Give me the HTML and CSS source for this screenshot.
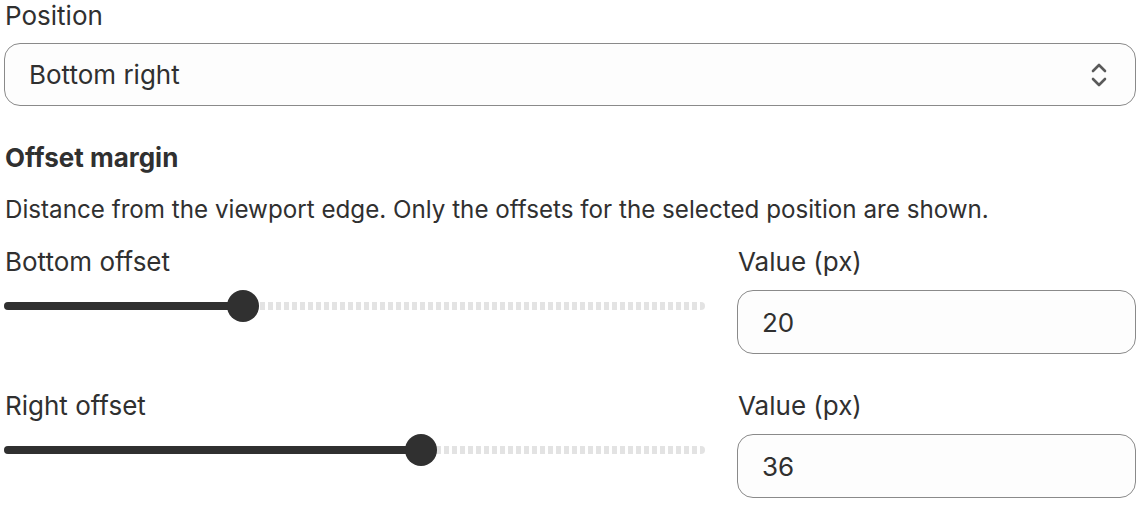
FILE: index.html
```html
<!DOCTYPE html>
<html lang="en">
<head>
    <meta charset="UTF-8">
    <title>Offset margin</title>
    <link rel="stylesheet" href="styles.css">
</head>
<body>
    <div class="panel">
        <div class="field">
            <label class="label">Position</label>
            <div class="select">
                <span class="select-value">Bottom right</span>
                <svg class="select-icon" viewBox="0 0 20 20" width="40" height="40">
                    <polyline points="7,8 10,5 13,8" />
                    <polyline points="7,12 10,15 13,12" />
                </svg>
            </div>
        </div>

        <div class="section">
            <h3 class="heading">Offset margin</h3>
            <p class="help">Distance from the viewport edge. Only the offsets for the selected position are shown.</p>

            <div class="offset-row">
                <div class="offset-slider">
                    <label class="label">Bottom offset</label>
                    <div class="range" data-value="20" data-max="60">
                        <div class="range-track"><div class="range-fill"></div></div>
                        <div class="range-thumb"></div>
                    </div>
                </div>
                <div class="offset-value">
                    <label class="label">Value (px)</label>
                    <input class="text-input" type="text" value="20">
                </div>
            </div>

            <div class="offset-row">
                <div class="offset-slider">
                    <label class="label">Right offset</label>
                    <div class="range" data-value="36" data-max="60">
                        <div class="range-track"><div class="range-fill"></div></div>
                        <div class="range-thumb"></div>
                    </div>
                </div>
                <div class="offset-value">
                    <label class="label">Value (px)</label>
                    <input class="text-input" type="text" value="36">
                </div>
            </div>
        </div>
    </div>

    <script>
        // place thumb + fill from the value
        document.querySelectorAll('.range').forEach(function (range) {
            const value = parseFloat(range.dataset.value);
            const max = parseFloat(range.dataset.max);
            const travel = range.clientWidth - 32;
            const center = 16 + travel * value / max;
            range.querySelector('.range-fill').style.width = center + 'px';
            range.querySelector('.range-thumb').style.left = (center - 16) + 'px';
        });
    </script>
</body>
</html>
```

FILE: styles.css
```css
body {
    margin: 0;
    background: #fff;
    color: #303030;
    font-family: Inter, "Noto Sans", sans-serif;
    font-size: 26px;
    line-height: 40px;
}
.panel {
    width: 1132px;
    padding-left: 4px;
    margin-top: -4px;
}
.label {
    display: block;
    padding-left: 1px;
}
.select {
    margin-top: 7px;
    height: 63px;
    box-sizing: border-box;
    border: 1px solid #8a8a8a;
    border-radius: 16px;
    background: #fdfdfd;
    display: flex;
    align-items: center;
    padding: 0 16px 0 24px;
}
.select-value {
    flex: 1;
}
.select-icon {
    fill: none;
    stroke: #5a5a5a;
    stroke-width: 1.3;
    stroke-linecap: round;
    stroke-linejoin: round;
}
.section {
    margin-top: 32px;
}
.heading {
    margin: 0;
    font-size: 26px;
    font-weight: 650;
    padding-left: 1px;
}
.help {
    margin: 12px 0 12px;
    padding-left: 1px;
    font-size: 24.2px;
}
.offset-row {
    display: grid;
    grid-template-columns: 701px 399px;
    column-gap: 32px;
    margin-bottom: 32px;
}
.range {
    position: relative;
    margin-top: 8px;
    height: 32px;
}
.range-track {
    position: relative;
    top: 12px;
    height: 8px;
    border-radius: 4px;
    background: repeating-linear-gradient(90deg, #e3e3e3 0 5px, transparent 5px 8px);
}
.range-fill {
    height: 8px;
    border-radius: 4px;
    background: #303030;
}
.range-thumb {
    position: absolute;
    top: 0;
    width: 32px;
    height: 32px;
    border-radius: 50%;
    background: #303030;
}
.text-input {
    display: block;
    margin-top: 8px;
    width: 100%;
    height: 64px;
    box-sizing: border-box;
    border: 1px solid #8a8a8a;
    border-radius: 16px;
    background: #fdfdfd;
    padding: 0 24px;
    font: inherit;
    color: #303030;
    outline: none;
}
```
